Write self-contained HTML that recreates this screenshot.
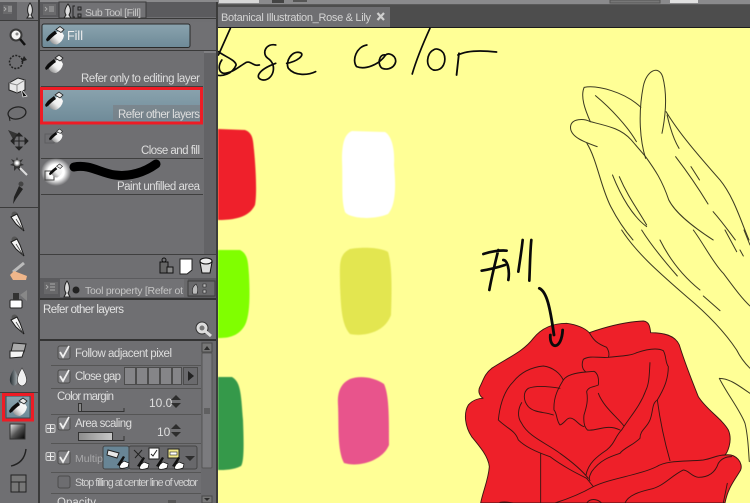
<!DOCTYPE html>
<html><head><meta charset="utf-8"><style>
html,body{margin:0;padding:0;background:#6f6f72;width:750px;height:503px;overflow:hidden}
svg{display:block}
text{font-family:"Liberation Sans",sans-serif;fill:#dedede;font-size:12px}
.r{stroke:#3a1512;fill:none;stroke-width:2.8;stroke-linecap:round;stroke-linejoin:round}
.l{stroke:#3c3b22;fill:none;stroke-width:3;stroke-linecap:round}
.k{stroke:#0a0a0a;fill:none;stroke-linecap:round;stroke-linejoin:round}
</style></head><body>
<svg width="750" height="503" viewBox="0 0 750 503" xmlns="http://www.w3.org/2000/svg">
<defs>
<linearGradient id="sel" x1="0" y1="0" x2="0" y2="1"><stop offset="0" stop-color="#8aa3ae"/><stop offset="1" stop-color="#6e8a98"/></linearGradient>
<linearGradient id="bk" x1="1" y1="0" x2="0" y2="1"><stop offset="0" stop-color="#fff"/><stop offset=".55" stop-color="#eee"/><stop offset="1" stop-color="#777"/></linearGradient>
<linearGradient id="gr" x1="0" y1="0" x2="1" y2="1"><stop offset="0" stop-color="#eee"/><stop offset=".5" stop-color="#555"/><stop offset="1" stop-color="#000"/></linearGradient>
<linearGradient id="ar" x1="0" y1="0" x2="1" y2="0"><stop offset="0" stop-color="#8c8c8c"/><stop offset="1" stop-color="#c8c8c8"/></linearGradient>
<linearGradient id="dr" x1="0" y1="0" x2="1" y2="0"><stop offset="0" stop-color="#20282c"/><stop offset="1" stop-color="#a8b0b4"/></linearGradient>
<radialGradient id="glow"><stop offset=".55" stop-color="#fff"/><stop offset="1" stop-color="#fff" stop-opacity="0"/></radialGradient>
<radialGradient id="spk"><stop offset=".3" stop-color="#fff"/><stop offset="1" stop-color="#555"/></radialGradient>
<g id="bucket">
<path d="M4 8 L15 4 L18 9 Q17 15 11 18 Q6 18 4 14 Z" fill="url(#bk)"/>
<path d="M0 13 C2 9 5 7 9 4 L11 7 C8 9 6 11 3 14 L1 15Z" fill="#0c0c0c"/>
<path d="M10 3 L14 0 L18 3 L15 6 Z" fill="#e8e8e8" stroke="#222" stroke-width=".8"/>
</g>
<g id="pen">
<circle cx="3.500" cy="2.500" r="3" fill="#555"/>
<path d="M0 5 L6 2 L9 8 L13 19 L5 12 Z" fill="#f4f4f4" stroke="#1c1c1c" stroke-width="1"/>
<path d="M5 7 L12 18" stroke="#444" stroke-width=".8"/>
</g>
<g id="hand"><path d="M0 6 L5 2 L10 4 L9 8 Q4 10 1 9 Z" fill="#fff" stroke="#111" stroke-width=".7"/><path d="M-2 6 L4 -3 L6 -2 L1 7 Z" fill="#111"/></g>
<path id="up" d="M0 5 L5 0 L10 5 Z" fill="#2d2d2d"/>
</defs>

<!-- canvas -->
<rect x="218" y="28" width="532" height="475" fill="#ffff96"/>
<!-- top strip -->
<rect x="0" y="0" width="750" height="5" fill="#8a8a8c"/>
<rect x="218" y="4" width="532" height="1" fill="#5a5a5a"/>
<rect x="219" y="0" width="40" height="3" fill="#d8d8d8"/><rect x="272" y="0" width="12" height="3" fill="#444"/><rect x="293" y="0" width="14" height="2" fill="#555"/>
<rect x="610" y="0" width="50" height="3" fill="#777" stroke="#555"/><rect x="670" y="0" width="28" height="3" fill="#e0e0e0"/>
<!-- tab strip -->
<rect x="218" y="5" width="532" height="22" fill="#4d4d4d"/>
<rect x="218" y="27" width="532" height="1" fill="#1c1c1c"/>
<rect x="218" y="7" width="172" height="20" fill="#6f6f72"/>
<text x="221" y="21" textLength="150" style="font-size:11px;fill:#d4d4d4">Botanical Illustration_Rose &amp; Lily</text>
<path d="M377.500 13 L384 20 M384 13 L377.500 20" stroke="#cfcfcf" stroke-width="2.200"/>

<!-- swatches -->
<g style="filter:blur(.5px)">
<path d="M218 129 L245 130 C253 133 253 140 254 150 C256 170 257 195 255 205 C250 215 240 220 218 220Z" fill="#ef202b"/>
<path d="M352 131 L385 132 C392 136 395 150 394 165 C396 185 396 205 388 214 C375 220 350 219 345 212 C341 200 343 185 342 160 C342 145 344 134 352 131Z" fill="#fff"/>
<path d="M218 250 L240 250 C248 254 248 262 249 275 C250 295 250 315 245 325 C238 338 225 338 218 338Z" fill="#80ff00"/>
<path d="M350 249 C360 247 380 247 388 252 C392 265 392 285 391 315 C385 332 365 337 350 334 C342 325 341 310 340 285 C340 265 338 255 350 249Z" fill="#e3e650"/>
<path d="M218 377 L232 377 C241 382 241 395 243 420 C244 445 244 462 241 466 C233 470 225 470 218 470Z" fill="#35994a"/>
<path d="M350 379 C358 376 372 376 384 384 C389 395 389 415 389 445 C383 460 360 468 344 463 C337 450 339 425 338 405 C337 390 342 383 350 379Z" fill="#e8548c"/>
</g>

<!-- base color + lily, zoom4 coords -->
<g transform="translate(215,0) scale(.3412,.3333)">
<g class="k" stroke-width="5">
<path d="M45 85 L10 165 M10 155 C30 170 60 180 62 195 C50 225 20 228 8 226 M20 180 C10 195 8 215 25 220 C50 220 70 200 90 188 C105 180 110 200 130 195"/>
<path d="M178 135 C150 128 135 160 155 175 C185 195 170 242 140 240 C115 235 125 210 178 190"/>
<path d="M210 190 C240 185 265 165 250 158 C225 150 205 185 215 205 C235 230 275 225 295 215"/>
<path d="M445 135 C415 140 400 180 415 200 C440 210 480 195 500 165 C480 160 475 195 490 205 C515 215 540 190 525 170 C515 160 505 160 500 165"/>
<path d="M630 85 C610 130 590 180 578 222"/>
<path d="M640 150 C620 160 615 200 640 210 C670 215 680 180 670 160 C660 145 645 145 640 150"/>
<path d="M715 160 L708 225 M712 165 C740 150 790 152 825 156" stroke-width="5.400"/>
</g>
<g class="l">
<path d="M1120 440 C1080 425 1040 410 1042 380 C1045 355 1080 355 1100 365 C1150 378 1190 385 1220 420 L1262 470 C1290 510 1310 540 1330 600 C1350 640 1400 680 1460 720"/>
<path d="M1100 365 C1085 330 1070 290 1082 262 C1120 255 1200 275 1248 322"/>
<path d="M1262 475 C1245 420 1240 340 1255 260 C1265 210 1300 195 1312 230 C1325 280 1322 340 1310 400"/>
<path d="M1322 335 C1360 400 1420 470 1480 540 C1520 590 1540 660 1565 720"/>
<path d="M1115 287 C1160 325 1210 380 1235 425 M1325 345 C1335 390 1345 420 1360 445 M1350 470 C1380 510 1420 570 1445 612 M1395 500 L1420 540"/>
<path d="M1090 430 C1120 480 1130 560 1160 620 C1180 660 1200 690 1225 720 M1165 525 C1190 590 1225 650 1265 680 M1185 530 C1210 590 1240 630 1265 675 M1460 635 C1490 670 1510 700 1525 720"/>
</g>
</g>
<!-- lily lower, zoom6 coords -->
<g transform="translate(600,230) scale(.3333)" class="l">
<path d="M65 0 C110 70 180 130 260 200 C320 250 370 300 410 360 C425 390 440 405 450 415"/>
<path d="M125 0 C150 40 190 90 232 138 M180 30 C210 90 250 140 300 180 M310 198 L360 242"/>
<path d="M280 0 C310 40 340 100 370 130 C400 170 425 205 450 228 M375 0 L410 65 M420 60 L430 78 M432 0 L450 45"/>
<path d="M358 445 C390 445 420 470 450 490 M358 445 C380 490 420 540 435 580 C445 620 445 660 448 695"/>
</g>
<!-- rose + writing, zoom3 coords -->
<g transform="translate(450,240) scale(.3333)">
<path d="M92 789 C100 750 115 720 118 680 C115 650 90 620 65 590 C45 560 40 520 55 495 C70 478 90 475 100 475 C90 470 82 455 90 440 C100 420 105 400 125 385 C170 355 220 335 250 295 C270 270 300 250 350 250 C385 255 405 265 418 278 C470 260 530 245 580 243 C600 245 600 265 602 278 C640 278 675 285 688 315 C705 370 725 420 745 470 C770 510 815 535 835 570 C850 605 830 640 825 645 C860 640 880 670 872 690 C855 720 835 740 825 789 Z" fill="#ee2029" stroke="#3a1512" stroke-width="2.800"/>
<g class="r">
<path d="M418 278 C430 300 440 310 470 322 C478 335 478 345 475 352 C450 355 420 345 400 358 C393 375 398 390 408 396 L432 394 C445 400 447 420 445 435 C430 442 415 440 410 455 C415 480 410 500 402 525 C400 545 402 560 412 570 C440 575 470 550 510 570"/>
<path d="M475 352 C510 348 540 348 560 338 C590 328 620 322 640 332 C650 350 645 365 655 380 C655 420 640 450 622 480 C605 490 610 515 600 540 C590 565 570 570 570 595 C550 615 520 625 510 640 C480 650 450 660 425 695 C420 705 415 715 420 722"/>
<path d="M600 368 C598 400 598 430 588 450 C570 500 540 530 515 570 C495 590 495 610 470 630 C440 650 415 670 408 705"/>
<path d="M622 480 C630 540 645 610 660 662"/>
<path d="M445 460 C460 500 500 530 522 558"/>
<path d="M408 396 C380 398 350 405 340 420 C325 445 310 470 312 510 C322 520 318 540 330 555 C345 550 350 530 365 535 C380 540 385 555 402 560"/>
<path d="M340 420 C330 400 310 382 280 378 C240 382 210 400 190 425 C165 450 150 490 145 540 C170 565 195 570 205 600 C230 625 270 640 300 650 C340 680 380 700 410 715 L430 740"/>
<path d="M330 445 C300 440 260 435 235 445 C220 455 218 480 235 500 C255 520 285 515 310 525"/>
<path d="M215 488 C205 505 200 530 215 550 C235 590 290 610 330 640 C365 665 395 690 415 715"/>
<path d="M272 640 L272 789"/>
<path d="M315 789 C360 775 395 760 430 740 C480 715 570 705 620 680 C650 660 710 665 760 660 C790 655 800 645 825 645"/>
<path d="M525 789 C535 765 570 755 600 748 C640 740 660 710 700 690 C715 690 725 710 745 712 C775 712 795 700 805 670 C815 655 830 650 845 650"/>
<path d="M820 789 L832 730 M150 787 C165 785 180 787 190 789 M410 789 C420 775 440 775 455 789"/>
</g>
<g class="k" stroke-width="8">
<path d="M118 150 C125 110 135 70 145 30 M100 42 C120 35 150 30 170 32 M95 92 C120 88 150 80 165 75 M160 60 C172 60 180 90 175 120"/>
<path d="M205 95 C210 60 215 30 218 0 M238 122 C240 80 240 40 244 0"/>
<path d="M268 145 C290 155 300 200 312 285 M301 285 C298 330 335 330 338 270" stroke-width="8.500"/>
</g>
</g>

<!-- left panels -->
<rect x="0" y="0" width="218" height="503" fill="#6f6f72"/>
<rect x="216" y="0" width="2" height="503" fill="#3c3c3c"/>
<rect x="0" y="0" width="218" height="2" fill="#8a8a8c"/>
<rect x="38" y="0" width="2" height="503" fill="#3a3a3a"/>
<!-- tool tabs -->
<rect x="0" y="2" width="38" height="18" fill="#5b5b5e"/>
<rect x="17" y="2" width="21" height="18" fill="#727275"/>
<rect x="3" y="5" width="9" height="9" fill="#6a6a6c"/>
<path d="M4 7 L6 9 L4 11 M8 7 H12 M8 9 H12 M8 11 H12" stroke="#aaa" fill="none"/>
<path d="M30 3 C33 7 33 12 31 15 L33 18 H27 L29 15 C27 12 27 7 30 3Z" fill="#ddd" stroke="#222"/>
<rect x="0" y="20" width="38" height="1" fill="#3c3c3c"/>
<rect x="40" y="2" width="176" height="15" fill="#5b5b5e"/>
<rect x="59" y="2" width="87" height="16" fill="#727275" stroke="#3a3a3a"/>
<rect x="43" y="4" width="13" height="11" fill="#6a6a6c"/>
<path d="M45 7 L47 9 L45 11 M49 7 H54 M49 9 H54 M49 11 H54" stroke="#aaa" fill="none"/>
<path d="M68 4 C71 8 71 12 69 15 L71 18 H64 L66 15 C64 12 65 8 68 4Z" fill="#ddd" stroke="#222"/>
<path d="M75 6 H73 V17 H75 M78 7 h3 v3 h-3z M78 14 h3 v3 h-3z" stroke="#222" fill="none"/>
<text x="85" y="16" textLength="56" style="font-size:10.500px;fill:#c8c8c8">Sub Tool [Fill]</text>
<rect x="40" y="18" width="176" height="1" fill="#3a3a3a"/>
<!-- big fill btn -->
<rect x="41" y="22" width="175" height="28" fill="#707073"/>
<rect x="42" y="24" width="148" height="23.500" rx="2" fill="url(#sel)" stroke="#2a2a2a"/>
<use href="#bucket" x="46" y="26.500"/>
<text x="67" y="40" style="font-size:12.500px;fill:#eee">Fill</text>
<rect x="40" y="50" width="176" height="1" fill="#3a3a3a"/>
<!-- list -->
<rect x="41" y="51" width="162" height="203" fill="#6f6f72"/>
<rect x="204" y="51" width="12" height="203" fill="#636366"/>
<rect x="204" y="51" width="12" height="2" fill="#808083"/>
<rect x="41" y="86" width="162" height="1" fill="#3f3f3f"/>
<rect x="41" y="123" width="162" height="1" fill="#3f3f3f"/>
<rect x="41" y="158" width="162" height="1" fill="#3f3f3f"/>
<rect x="41" y="194" width="162" height="1" fill="#3f3f3f"/>
<use href="#bucket" x="45" y="55"/>
<text x="200" y="82" text-anchor="end" textLength="119" style="font-size:11.500px">Refer only to editing layer</text>
<rect x="41" y="88" width="162" height="35" fill="url(#sel)"/>
<rect x="113" y="105" width="87" height="15" fill="#7a7a7d" opacity=".55"/>
<use href="#bucket" x="45" y="92"/>
<text x="200" y="118" text-anchor="end" textLength="82" style="font-size:11.500px">Refer other layers</text>
<rect x="41.500" y="88.500" width="160" height="34.500" fill="none" stroke="#ee1c25" stroke-width="3"/>
<rect x="45" y="134" width="9" height="9" fill="none" stroke="#5e5e60"/>
<g transform="translate(49,129) scale(.75)"><use href="#bucket"/></g>
<text x="200" y="154" text-anchor="end" textLength="59" style="font-size:11.500px">Close and fill</text>
<ellipse cx="56" cy="172" rx="15" ry="14" fill="url(#glow)"/>
<rect x="45" y="171" width="9" height="9" fill="none" stroke="#444"/>
<g transform="translate(49,164) scale(.75)"><use href="#bucket"/></g>
<path d="M74 167 C90 164 100 173 115 175 C130 177 145 172 156 164" stroke="#000" stroke-width="9" fill="none" stroke-linecap="round"/>
<text x="200" y="190" text-anchor="end" textLength="83" style="font-size:11.500px">Paint unfilled area</text>
<!-- separators -->
<rect x="40" y="254" width="176" height="1" fill="#3f3f3f"/>
<!-- bottom icons -->
<g stroke="#111" fill="#ddd"><rect x="160" y="262" width="8" height="11" fill="#666"/><rect x="167" y="267" width="6" height="6" fill="#888"/><circle cx="164" cy="260" r="2" fill="none"/></g>
<path d="M180 259 H192 V270 L187 274 H180Z" fill="#fff" stroke="#222"/>
<path d="M200 262 H212 L210 273 H202Z" fill="#ddd" stroke="#111"/><ellipse cx="206" cy="261" rx="6" ry="3" fill="#eee" stroke="#111"/>
<!-- tool property tab -->
<rect x="40" y="278" width="176" height="20" fill="#5b5b5e"/>
<rect x="60" y="279" width="127" height="18" fill="#727275"/>
<rect x="44" y="282" width="14" height="12" fill="#68686a"/>
<path d="M46 285 L48 287 L46 289 M50 284 H55 M50 287 H55 M50 290 H55" stroke="#aaa" fill="none"/>
<path d="M67 281 C70 285 70 290 68 293 L70 297 H64 L66 293 C64 290 64 285 67 281Z" fill="#ddd" stroke="#222"/>
<circle cx="76" cy="290" r="3.500" fill="#222"/>
<text x="85" y="294" textLength="98" style="font-size:10.500px;fill:#c4c4c4">Tool property [Refer ot</text>
<rect x="184" y="279" width="4" height="18" fill="#6a6a6c"/>
<rect x="188" y="281" width="27" height="15" fill="#6a6a6c" stroke="#3c3c3c"/>
<path d="M196 284 C198 287 198 291 197 294 H193 C192 291 192 287 196 284Z M203 284 h3 v3 h-3z M203 290 h3 v3 h-3z" fill="#bbb" stroke="#222" stroke-width=".6"/>
<rect x="40" y="298" width="176" height="2" fill="#333"/>
<!-- name box -->
<text x="43" y="313" textLength="81" style="font-size:11.500px;fill:#e2e2e2">Refer other layers</text>
<circle cx="202" cy="328" r="6" fill="#ddd" stroke="#333"/><path d="M205 331 L211 336" stroke="#ddd" stroke-width="3"/><circle cx="202" cy="328" r="2.500" fill="#777"/>
<rect x="40" y="339" width="176" height="2" fill="#333"/>
<!-- property rows -->
<g stroke="#555" fill="none">
<path d="M51 365.500 H201 M51 388.500 H201 M51 414.500 H201 M51 443.500 H201 M51 472.500 H201 M51 493.500 H201"/>
</g>
<g id="checks">
<g fill="#828285" stroke="#4c4c4c"><rect x="58" y="346" width="12" height="13" rx="2"/><rect x="58" y="370" width="12" height="13" rx="2"/><rect x="58" y="417" width="12" height="13" rx="2"/><rect x="58" y="451" width="12" height="13" rx="2"/><rect x="58" y="476" width="12" height="12" rx="2" fill="#6d6d70"/></g>
<path d="M60 352 L63 357 L69 346 M60 376 L63 381 L69 370 M60 423 L63 428 L69 417 M60 457 L63 462 L69 451" stroke="#f0f0f0" stroke-width="1.800" fill="none"/>
</g>
<text x="75" y="357" textLength="97" style="font-size:11.500px">Follow adjacent pixel</text>
<text x="75" y="380" textLength="46" style="font-size:11.500px">Close gap</text>
<g fill="#858588" stroke="#4c4c4c"><rect x="124.500" y="367.500" width="11" height="17"/><rect x="136.500" y="367.500" width="11" height="17"/><rect x="148.500" y="367.500" width="11" height="17"/><rect x="160.500" y="367.500" width="11" height="17"/><rect x="172.500" y="367.500" width="9" height="17"/><rect x="183.500" y="367.500" width="14" height="17" fill="#6a6a6d"/></g>
<path d="M188 371 L194 376 L188 381Z" fill="#222"/>
<text x="57" y="400" textLength="57" style="font-size:11.500px">Color margin</text>
<rect x="78.500" y="403.500" width="3" height="8" fill="#888" stroke="#333"/>
<path d="M78 411.500 H124 V408" stroke="#333" fill="none"/>
<text x="149" y="407" style="font-size:12px">10.0</text>
<use href="#up" x="171" y="395"/><path d="M171 403 L181 403 L176 408Z" fill="#2d2d2d"/>
<text x="75" y="427" textLength="57" style="font-size:11.500px">Area scaling</text>
<rect x="78.500" y="432.500" width="34" height="8" fill="url(#ar)" stroke="#333"/>
<path d="M112 440.500 H124 V436" stroke="#333" fill="none"/>
<text x="157" y="436" style="font-size:12px">10</text>
<use href="#up" x="171" y="424"/><path d="M171 432 L181 432 L176 437Z" fill="#2d2d2d"/>
<g fill="#808083" stroke="#cfcfcf"><rect x="46" y="424.500" width="9" height="8" rx="1.500"/><rect x="46" y="452.500" width="9" height="8" rx="1.500"/></g>
<path d="M50.500 425 V432 M47 428.500 H54 M50.500 453 V460 M47 456.500 H54" stroke="#eee"/>
<text x="75" y="462" style="font-size:10.500px;fill:#a8a8aa">Multipl</text>
<rect x="129" y="446" width="68" height="23" rx="2" fill="#68686b" stroke="#444"/>
<rect x="103" y="446" width="26" height="23" rx="2" fill="#688595" stroke="#444"/>
<path d="M108 450 L119 453 L117 458 L107 455Z" fill="#e8e8e8" stroke="#222"/><g transform="translate(119,459)"><use href="#hand"/></g>
<path d="M134 450 L142 458 M142 450 L135 458" stroke="#222"/><g transform="translate(139,460)"><use href="#hand"/></g>
<rect x="149" y="448" width="10" height="11" fill="#fff" stroke="#222"/><path d="M151 454 L153 456 L157 450" stroke="#222" fill="none"/><g transform="translate(158,460)"><use href="#hand"/></g>
<rect x="168" y="449" width="11" height="9" fill="#f2ea8c" stroke="#222"/><rect x="170" y="452" width="7" height="3" fill="#fff" stroke="#222" stroke-width=".6"/><g transform="translate(174,460)"><use href="#hand"/></g>
<path d="M185 456 H195 L190 461Z" fill="#2d2d2d"/>
<text x="75" y="486" textLength="123" style="font-size:10.800px;fill:#cfcfcf">Stop filling at center line of vector</text>
<text x="57" y="506" style="font-size:11.500px">Opacity</text>
<rect x="168" y="500" width="8" height="3" fill="#555"/>
<!-- prop scrollbar -->
<rect x="201" y="341" width="15" height="162" fill="#6a6a6d"/>
<rect x="202" y="343" width="10" height="9" fill="#777" stroke="#4a4a4a"/><path d="M204 350 L207 346 L210 350Z" fill="#2d2d2d"/>
<rect x="202" y="353" width="10" height="115" rx="1" fill="#7b7b7e" stroke="#555"/>
<path d="M204 409 H210 M204 411 H210 M204 413 H210" stroke="#444"/>
<rect x="202" y="496" width="10" height="7" fill="#777" stroke="#4a4a4a"/><path d="M204 498 H210 L207 501Z" fill="#2d2d2d"/>

<!-- toolbar icons -->
<rect x="0" y="21" width="38" height="482" fill="#6f6f72"/>
<g>
<circle cx="16" cy="35" r="5.500" fill="#f4f4f4" stroke="#3a3a3a" stroke-width="2"/><circle cx="17" cy="34" r="1.500" fill="#888"/><path d="M20 39 L25 45" stroke="#111" stroke-width="2.500"/>
<circle cx="16" cy="62" r="6.500" fill="none" stroke="#222" stroke-width="1.500" stroke-dasharray="2 1.300"/><path d="M24 56 L27 60 L21 62Z" fill="#222"/>
<path d="M9 83 L18 78 L25 80 V90 L17 93 L9 90Z" fill="#e8e8e8" stroke="#222"/><path d="M9 83 L17 85 L25 80 M17 85 V93" stroke="#888" fill="none"/><path d="M21 89 L27 96 L23 97 Z" fill="#111" stroke="#eee" stroke-width=".7"/>
<ellipse cx="17" cy="113" rx="9" ry="6" fill="none" stroke="#222" stroke-width="1.300" transform="rotate(-10 17 113)"/><path d="M9 116 L10 121" stroke="#222"/>
<path d="M8 130 L18 134 L14 141Z" fill="#333"/><path d="M19 134 V149 M12 141 H27 M19 133 l-3 3 h6z M19 150 l-3 -3 h6z M11 141 l3 -3 v6z M28 141 l-3 -3 v6z" stroke="#222" fill="#222"/>
<path d="M17 157 L18.500 161 L23 159 L20.500 163 L24 165 L20 166 L20 171 L17 168 L14 171 L14 166 L10 165 L13.500 163 L11 159 L15.500 161Z" fill="#333"/><circle cx="17" cy="163" r="3.500" fill="url(#spk)"/><path d="M20 168 L27 175" stroke="#ddd" stroke-width="2"/>
<path d="M19 186 L23 189 L16 199 L13 204 L14 197Z" fill="#222"/><circle cx="21" cy="184" r="2.500" fill="#444"/>
<rect x="0" y="207" width="38" height="1" fill="#3c3c3c"/>
<g transform="translate(11,212)"><use href="#pen"/></g>
<g transform="translate(11,237)"><use href="#pen"/></g>
<path d="M13 272 L24 263" stroke="#bbb" stroke-width="3"/><path d="M10 275 L14 271 L27 276 L26 280 H13Z" fill="#f0b68a"/>
<rect x="10" y="300" width="12" height="8" rx="1" fill="#fff" stroke="#222"/><rect x="13" y="293" width="6" height="7" fill="#333"/><path d="M20 295 L27 290 V301Z" fill="#888"/>
<g transform="translate(11,315)"><use href="#pen"/></g>
<path d="M13 343 L26 344 L24 352 L11 352Z" fill="#aaa" stroke="#222"/><path d="M10 351 L24 351 L22 357 L10 358Z" fill="#f4f4f4" stroke="#222"/>
<path d="M14 369 C9 376 8 384 14 386 C19 384 19 376 14 369Z" fill="url(#dr)"/><path d="M22 368 C17 376 15 384 22 386 C29 384 27 376 22 368Z" fill="#f0f0f0" stroke="#333" stroke-width=".6"/>
<rect x="0" y="392" width="38" height="1" fill="#3c3c3c"/>
<rect x="6" y="396" width="24" height="22" fill="url(#sel)" stroke="#3a4a52"/>
<use href="#bucket" x="9" y="398"/>
<rect x="3.500" y="394.500" width="29" height="25.500" fill="none" stroke="#ee1c25" stroke-width="3"/>
<rect x="10" y="424" width="15" height="15" fill="url(#gr)" stroke="#333"/>
<path d="M11 466 C20 464 25 458 26 449" stroke="#222" stroke-width="1.400" fill="none"/>
<g fill="#777" stroke="#222"><rect x="11" y="475" width="15" height="7"/><rect x="11" y="482" width="8" height="10"/><rect x="19" y="482" width="7" height="10"/></g>
</g>
</svg>
</body></html>
